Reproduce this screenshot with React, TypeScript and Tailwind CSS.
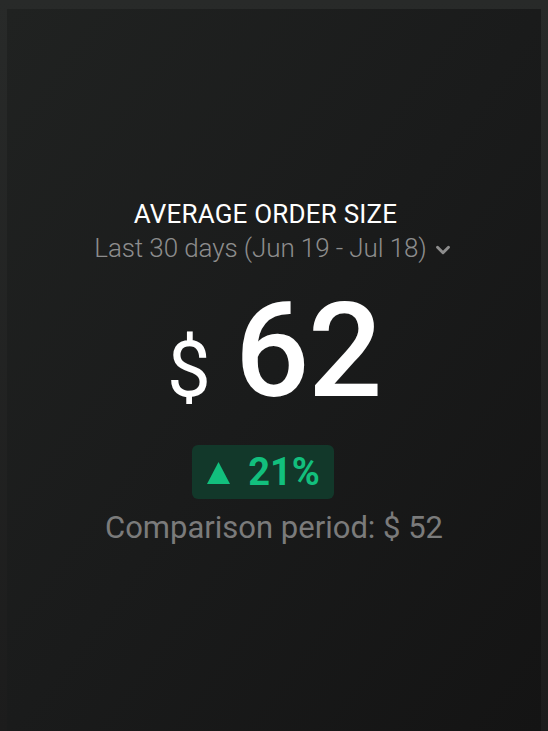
import { ChevronDown } from "lucide-react";

const AverageOrderSize = () => {
  return (
    <div className="min-h-[731px] w-full bg-gradient-to-b from-[#282a29] to-[#1c1c1c] px-[7px] pt-[9px]">
      <div className="min-h-[722px] w-full bg-gradient-to-br from-[#202221] via-[#1a1b1b] to-[#141414] flex flex-col items-center pt-[188px] font-['Roboto',sans-serif]">
        <h2 className="mr-[17px] text-[26px] leading-[34px] text-white tracking-[0.2px]">
          AVERAGE ORDER SIZE
        </h2>
        <button className="flex items-center gap-[5px] text-[26px] leading-[34px] text-[#8d8d8d] font-light tracking-[-0.1px]">
          Last 30 days (Jun 19 - Jul 18)
          <ChevronDown size={22} strokeWidth={3.2} className="text-[#8d8d8d] mt-[4px]" />
        </button>
        <div className="mt-[23px] flex items-baseline gap-[24px] text-white">
          <span className="text-[78px] leading-none">$</span>
          <span className="text-[131px] leading-[127px] font-medium tracking-[-1.5px]">62</span>
        </div>
        <div className="mr-[22px] mt-[30px] rounded-[6px] bg-[#12382a] pl-[15px] pr-[14px] h-[54px] flex items-center gap-[18px] text-[#12bf7d] font-bold">
          <svg width="23" height="22" viewBox="0 0 23 22" className="mt-[1px]">
            <path d="M11.5 0 L23 22 L0 22 Z" fill="#12bf7d" />
          </svg>
          <span className="text-[38px] leading-none">21%</span>
        </div>
        <p className="mt-[8px] text-[31px] leading-[42px] text-[#7b7b7b]">
          Comparison period: $ 52
        </p>
      </div>
    </div>
  );
};

export default function App() {
  return <AverageOrderSize />;
}
